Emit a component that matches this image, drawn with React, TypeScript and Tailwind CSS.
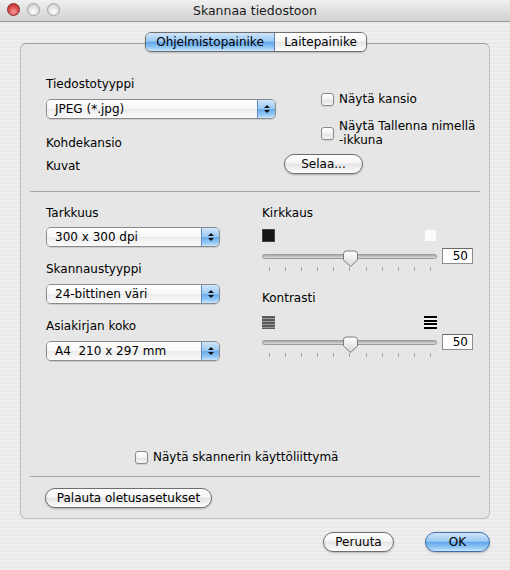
import React from "react";

const font = "font-['Lucida_Grande','DejaVu_Sans',sans-serif]";

function Popup({ w, text }: { w: string; text: string }) {
  return (
    <div className={`flex h-[20px] ${w} rounded-[5px] border border-[#8b8b8b] overflow-hidden shadow-[0_1px_1px_rgba(0,0,0,0.12)]`}>
      <div className="flex-1 flex items-center pl-[8px] text-[12px] text-black whitespace-pre bg-[linear-gradient(to_bottom,#ffffff_0%,#f7f7f7_50%,#ececec_52%,#fafafa_100%)]">
        {text}
      </div>
      <div className="w-[18px] flex flex-col items-center justify-center gap-[2px] border-l border-[#5f8bc0] bg-[linear-gradient(to_bottom,#cfe5fb_0%,#9ccaf3_48%,#6aaaec_52%,#8cc3f3_78%,#c8e6ff_100%)]">
        <svg width="6" height="3" viewBox="0 0 6 3"><path d="M3 0 L6 3 L0 3 Z" fill="#111" /></svg>
        <svg width="6" height="3" viewBox="0 0 6 3"><path d="M0 0 L6 0 L3 3 Z" fill="#111" /></svg>
      </div>
    </div>
  );
}

function Checkbox() {
  return (
    <span className="inline-block w-[13px] h-[13px] shrink-0 rounded-[3px] border border-[#8a8a8a] bg-[linear-gradient(to_bottom,#ffffff_0%,#f2f2f2_50%,#e2e2e2_52%,#f6f6f6_100%)] shadow-[0_1px_1px_rgba(0,0,0,0.1)]" />
  );
}

function AquaButton({ w, text, blue }: { w: string; text: string; blue?: boolean }) {
  return (
    <div
      className={`flex items-center justify-center ${w} h-[20px] rounded-full border text-[12px] text-black shadow-[0_1px_2px_rgba(0,0,0,0.25)] ${
        blue
          ? "border-[#3f6fae] bg-[linear-gradient(to_bottom,#cfe5fb_0%,#9ccaf3_45%,#66a7ec_52%,#8cc3f3_78%,#cbe8ff_100%)]"
          : "border-[#6e6e6e] bg-[linear-gradient(to_bottom,#ffffff_0%,#f5f5f5_45%,#e4e4e4_52%,#f3f3f3_80%,#ffffff_100%)]"
      }`}
    >
      {text}
    </div>
  );
}

function Slider() {
  return (
    <div>
      <div className="flex items-center h-[16px]">
        <div className="relative w-[175px] h-[16px] flex items-center">
          <div className="w-full h-[5px] rounded-full border border-[#9a9a9a] bg-[linear-gradient(to_bottom,#a8a8a8,#dcdcdc)]" />
          <svg className="absolute left-[80px] top-[2px]" width="17" height="18" viewBox="0 0 17 18">
            <defs>
              <linearGradient id="thumbg" x1="0" y1="0" x2="0" y2="1">
                <stop offset="0" stopColor="#ffffff" />
                <stop offset="0.5" stopColor="#ececec" />
                <stop offset="1" stopColor="#d6d6d6" />
              </linearGradient>
            </defs>
            <path d="M1.5 4 Q1.5 1 4.5 1 H12.5 Q15.5 1 15.5 4 V10 L8.5 16.5 L1.5 10 Z" fill="url(#thumbg)" stroke="#7c7c7c" strokeWidth="1" />
          </svg>
        </div>
        <div className="ml-[5px] w-[31px] h-[16px] border border-[#8d8d8d] border-t-[#6a6a6a] bg-white flex items-center justify-end pr-[4px] text-[12px] text-black">
          50
        </div>
      </div>
      <div className="mt-[3px] w-[175px] h-[4px] flex justify-between pl-[7px] pr-[6px]">
        {Array.from({ length: 11 }).map((_, i) => (
          <span key={i} className="w-[1px] h-[4px] bg-[#a4a4a4]" />
        ))}
      </div>
    </div>
  );
}

export default function App() {
  return (
    <div
      className={`${font} w-[510px] h-[570px] flex flex-col overflow-hidden text-black bg-[repeating-linear-gradient(to_bottom,#efefef_0px,#efefef_2px,#e9e9e9_2px,#e9e9e9_4px)]`}
    >
      {/* Title bar */}
      <div className="relative h-[22px] shrink-0 flex items-center justify-center border-b border-[#9a9a9a] bg-[linear-gradient(to_bottom,#f0f0f0_0%,#e0e0e0_50%,#d2d2d2_100%)] rounded-t-[5px]">
        <div className="absolute left-[7px] top-[3px] flex gap-[7px]">
          <span className="w-[13px] h-[13px] rounded-full border border-[#8c2a2a] bg-[radial-gradient(circle_at_50%_70%,#f4a2a2_0%,#e05454_45%,#b52424_100%)]" />
          <span className="w-[13px] h-[13px] rounded-full border border-[#a2a2a2] bg-[radial-gradient(circle_at_50%_70%,#ffffff_0%,#e4e4e4_50%,#c4c4c4_100%)]" />
          <span className="w-[13px] h-[13px] rounded-full border border-[#a2a2a2] bg-[radial-gradient(circle_at_50%_70%,#ffffff_0%,#e4e4e4_50%,#c4c4c4_100%)]" />
        </div>
        <span className="text-[12.5px] text-[#1a1a1a] mt-[2px]">Skannaa tiedostoon</span>
      </div>

      <div className="px-[20px] pt-[10px] flex flex-col">
        {/* Tabs */}
        <div className="relative z-10 flex justify-center h-[20px] pr-[1px]">
          <div className="flex h-[20px] rounded-[6px] border border-[#6f6f6f] overflow-hidden shadow-[0_1px_2px_rgba(0,0,0,0.2)] ml-[3px]">
            <div className="w-[129px] flex items-center justify-center text-[12px] border-r border-[#5f83b2] bg-[linear-gradient(to_bottom,#cfe5fb_0%,#9ccaf3_45%,#66a7ec_52%,#8cc3f3_78%,#cbe8ff_100%)]">
              Ohjelmistopainike
            </div>
            <div className="w-[91px] flex items-center justify-center text-[12px] bg-[linear-gradient(to_bottom,#ffffff_0%,#f5f5f5_45%,#e6e6e6_52%,#f3f3f3_80%,#ffffff_100%)]">
              Laitepainike
            </div>
          </div>
        </div>

        {/* Group box */}
        <div className="mt-[-9px] h-[476px] box-border rounded-[6px] border border-[#bcbcbc] border-t-[#9e9e9e] bg-[#e6e6e6] flex flex-col">
          {/* Section 1 */}
          <div className="h-[147px] flex pl-[25px]">
            <div className="w-[230px] pt-[32px] flex flex-col">
              <div className="h-[16px] leading-[16px] text-[12px]">Tiedostotyyppi</div>
              <div className="mt-[7px]">
                <Popup w="w-[230px]" text="JPEG (*.jpg)" />
              </div>
              <div className="mt-[16px] h-[16px] leading-[16px] text-[12px]">Kohdekansio</div>
              <div className="mt-[7px] h-[16px] leading-[16px] text-[12px]">Kuvat</div>
            </div>
            <div className="ml-[8px] pt-[47px] flex flex-col">
              <div className="pl-[37px] h-[16px] flex items-center gap-[5px] text-[12px]">
                <Checkbox />
                <span>Näytä kansio</span>
              </div>
              <div className="mt-[12px] pl-[37px] flex gap-[5px] text-[12px]">
                <span className="mt-[8px]">
                  <Checkbox />
                </span>
                <span className="leading-[14px]">
                  Näytä Tallenna nimellä
                  <br />
                  -ikkuna
                </span>
              </div>
              <div className="mt-[7px]">
                <AquaButton w="w-[79px]" text="Selaa..." />
              </div>
            </div>
          </div>

          <div className="h-[1px] mx-[9px] bg-[#a6a6a6]" />

          {/* Section 2 */}
          <div className="h-[284px] flex flex-col">
            <div className="flex pl-[25px]">
              <div className="w-[174px] flex flex-col">
                <div className="mt-[13px] h-[16px] leading-[16px] text-[12px]">Tarkkuus</div>
                <div className="mt-[6px]">
                  <Popup w="w-[174px]" text="300 x 300 dpi" />
                </div>
                <div className="mt-[14px] h-[16px] leading-[16px] text-[12px]">Skannaustyyppi</div>
                <div className="mt-[7px]">
                  <Popup w="w-[174px]" text="24-bittinen väri" />
                </div>
                <div className="mt-[14px] h-[16px] leading-[16px] text-[12px]">Asiakirjan koko</div>
                <div className="mt-[7px]">
                  <Popup w="w-[174px]" text="A4  210 x 297 mm" />
                </div>
              </div>
              <div className="ml-[42px] w-[212px] flex flex-col">
                <div className="mt-[13px] h-[16px] leading-[16px] text-[12px]">Kirkkaus</div>
                <div className="mt-[8px] w-[175px] h-[13px] flex justify-between">
                  <span className="w-[13px] h-[13px] bg-[#161616] border border-[#444]" />
                  <span className="w-[13px] h-[13px] bg-[#fbfbfb] border border-[#e6e6e6]" />
                </div>
                <div className="mt-[6px]">
                  <Slider />
                </div>
                <div className="mt-[19px] h-[16px] leading-[16px] text-[12px]">Kontrasti</div>
                <div className="mt-[10px] w-[175px] h-[13px] flex justify-between">
                  <svg width="13" height="13" viewBox="0 0 13 13">
                    <rect x="0" y="0" width="13" height="13" fill="#9a9a9a" />
                    <rect x="0" y="0" width="13" height="2" fill="#5a5a5a" />
                    <rect x="0" y="3" width="13" height="2" fill="#5a5a5a" />
                    <rect x="0" y="6" width="13" height="2" fill="#5a5a5a" />
                    <rect x="0" y="9" width="13" height="2" fill="#5a5a5a" />
                    <rect x="0" y="12" width="13" height="1" fill="#5a5a5a" />
                  </svg>
                  <svg width="13" height="13" viewBox="0 0 13 13">
                    <rect x="0" y="0" width="13" height="13" fill="#f4f4f4" />
                    <rect x="0" y="0" width="13" height="2" fill="#000" />
                    <rect x="0" y="4" width="13" height="2" fill="#000" />
                    <rect x="0" y="7" width="13" height="2" fill="#000" />
                    <rect x="0" y="11" width="13" height="2" fill="#000" />
                  </svg>
                </div>
                <div className="mt-[5px]">
                  <Slider />
                </div>
              </div>
            </div>
            <div className="mt-auto mb-[11px] pl-[114px] h-[16px] flex items-center gap-[5px] text-[12px]">
              <Checkbox />
              <span>Näytä skannerin käyttöliittymä</span>
            </div>
          </div>

          <div className="h-[1px] mx-[9px] bg-[#a6a6a6]" />

          {/* Section 3 */}
          <div className="pl-[24px] pt-[11px]">
            <AquaButton w="w-[167px]" text="Palauta oletusasetukset" />
          </div>
        </div>
      </div>

      {/* Footer */}
      <div className="mt-[13px] flex justify-end pr-[20px] gap-[31px]">
        <AquaButton w="w-[71px]" text="Peruuta" />
        <AquaButton w="w-[65px]" text="OK" blue />
      </div>
    </div>
  );
}
